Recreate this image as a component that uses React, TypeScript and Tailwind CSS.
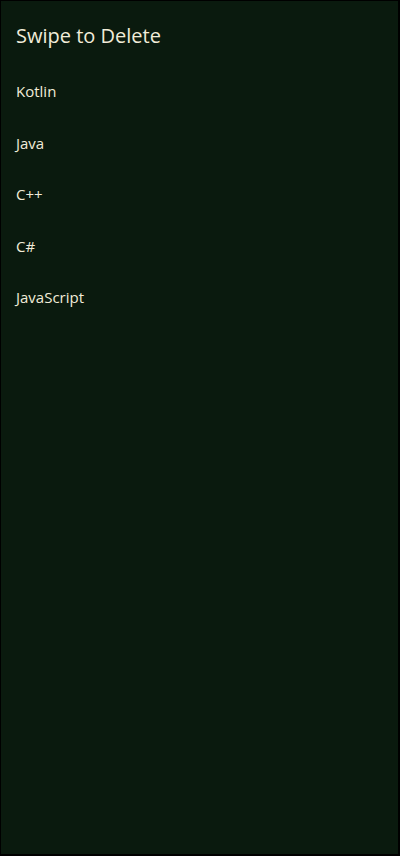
const items = ["Kotlin", "Java", "C++", "C#", "JavaScript"];

export default function App() {
  return (
    <div
      className="h-[856px] w-[400px] bg-[#0a1a0e] border-t border-l border-r-2 border-b-2 border-black text-[#f1ecd9]"
      style={{ fontFamily: "'Open Sans', Lato, sans-serif" }}
    >
      <h1 className="px-[15px] pt-[22px] text-[20px] leading-[26px]">Swipe to Delete</h1>
      <ul className="mt-[32px] flex flex-col">
        {items.map((item) => (
          <li key={item} className="px-[15px] h-[51.5px] text-[15px] leading-[20px]">
            {item}
          </li>
        ))}
      </ul>
    </div>
  );
}
